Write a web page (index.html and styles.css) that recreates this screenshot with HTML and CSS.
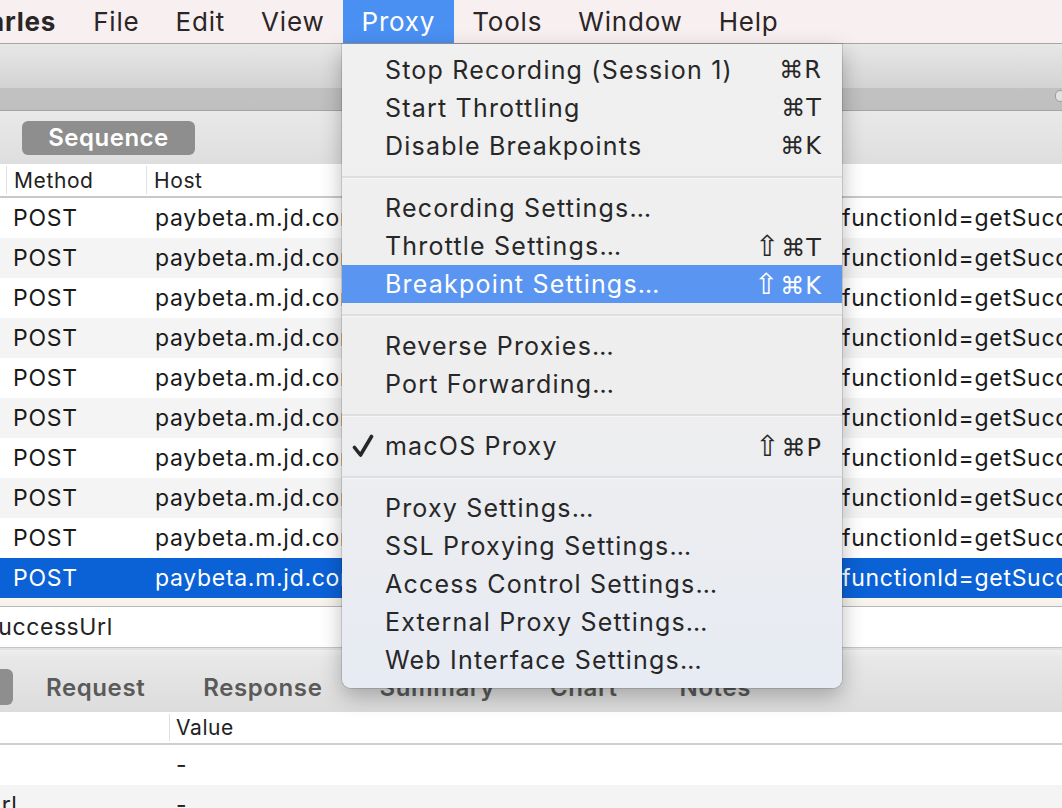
FILE: index.html
```html
<!DOCTYPE html>
<html>
<head>
<meta charset="utf-8">
<link rel="stylesheet" href="styles.css">
</head>
<body>
<div class="screen">
  <div class="menubar">
    <span class="app">Charles</span>
    <span class="mi">File</span>
    <span class="mi">Edit</span>
    <span class="mi">View</span>
    <span class="mi active">Proxy</span>
    <span class="mi">Tools</span>
    <span class="mi">Window</span>
    <span class="mi">Help</span>
  </div>

  <div class="window">
    <div class="toolbar"></div>
    <div class="toolband"><span class="searchedge"></span></div>
    <div class="viewbar"><span class="seg">Sequence</span></div>

    <div class="thead">
      <span class="c0"></span>
      <span class="c1">Method</span>
      <span class="c2">Host</span>
      <span class="c3"></span>
    </div>
    <div class="tbody">
      <div class="row"><span class="c0"></span><span class="c1">POST</span><span class="c2">paybeta.m.jd.com</span><span class="c3">functionId=getSuccessUrl</span></div>
      <div class="row alt"><span class="c0"></span><span class="c1">POST</span><span class="c2">paybeta.m.jd.com</span><span class="c3">functionId=getSuccessUrl</span></div>
      <div class="row"><span class="c0"></span><span class="c1">POST</span><span class="c2">paybeta.m.jd.com</span><span class="c3">functionId=getSuccessUrl</span></div>
      <div class="row alt"><span class="c0"></span><span class="c1">POST</span><span class="c2">paybeta.m.jd.com</span><span class="c3">functionId=getSuccessUrl</span></div>
      <div class="row"><span class="c0"></span><span class="c1">POST</span><span class="c2">paybeta.m.jd.com</span><span class="c3">functionId=getSuccessUrl</span></div>
      <div class="row alt"><span class="c0"></span><span class="c1">POST</span><span class="c2">paybeta.m.jd.com</span><span class="c3">functionId=getSuccessUrl</span></div>
      <div class="row"><span class="c0"></span><span class="c1">POST</span><span class="c2">paybeta.m.jd.com</span><span class="c3">functionId=getSuccessUrl</span></div>
      <div class="row alt"><span class="c0"></span><span class="c1">POST</span><span class="c2">paybeta.m.jd.com</span><span class="c3">functionId=getSuccessUrl</span></div>
      <div class="row"><span class="c0"></span><span class="c1">POST</span><span class="c2">paybeta.m.jd.com</span><span class="c3">functionId=getSuccessUrl</span></div>
      <div class="row sel"><span class="c0"></span><span class="c1">POST</span><span class="c2">paybeta.m.jd.com</span><span class="c3">functionId=getSuccessUrl</span></div>
    </div>
    <div class="tailband"></div>

    <div class="urlrow"><span class="urltext">getSuccessUrl</span></div>

    <div class="tabs">
      <span class="tabbtn"></span>
      <span class="tab t-req">Request</span>
      <span class="tab t-res">Response</span>
      <span class="tab t-sum">Summary</span>
      <span class="tab t-chart">Chart</span>
      <span class="tab t-notes">Notes</span>
    </div>

    <div class="dhead"><span class="d1"></span><span class="d2">Value</span></div>
    <div class="drow"><span class="d1"></span><span class="d2">-</span></div>
    <div class="drow alt"><span class="d1 cut">Url</span><span class="d2">-</span></div>
  </div>

  <div class="menu">
    <div class="item"><span class="chk"></span><span class="lbl">Stop Recording (Session 1)</span><span class="sc">⌘R</span></div>
    <div class="item"><span class="chk"></span><span class="lbl">Start Throttling</span><span class="sc">⌘T</span></div>
    <div class="item"><span class="chk"></span><span class="lbl">Disable Breakpoints</span><span class="sc">⌘K</span></div>
    <div class="sep"></div>
    <div class="item"><span class="chk"></span><span class="lbl">Recording Settings…</span><span class="sc"></span></div>
    <div class="item"><span class="chk"></span><span class="lbl">Throttle Settings…</span><span class="sc"><span class="shift">⇧</span>⌘T</span></div>
    <div class="item hl"><span class="chk"></span><span class="lbl">Breakpoint Settings…</span><span class="sc"><span class="shift">⇧</span>⌘K</span></div>
    <div class="sep"></div>
    <div class="item"><span class="chk"></span><span class="lbl">Reverse Proxies…</span><span class="sc"></span></div>
    <div class="item"><span class="chk"></span><span class="lbl">Port Forwarding…</span><span class="sc"></span></div>
    <div class="sep"></div>
    <div class="item"><span class="chk"><svg class="tick" viewBox="0 0 22 24" width="22" height="24"><path d="M2.5 13.5 L8.5 21 L19.5 2.5" fill="none" stroke="#272727" stroke-width="3.6" stroke-linecap="round" stroke-linejoin="round"/></svg></span><span class="lbl">macOS Proxy</span><span class="sc"><span class="shift">⇧</span>⌘P</span></div>
    <div class="sep"></div>
    <div class="item"><span class="chk"></span><span class="lbl">Proxy Settings…</span><span class="sc"></span></div>
    <div class="item"><span class="chk"></span><span class="lbl">SSL Proxying Settings…</span><span class="sc"></span></div>
    <div class="item"><span class="chk"></span><span class="lbl">Access Control Settings…</span><span class="sc"></span></div>
    <div class="item"><span class="chk"></span><span class="lbl">External Proxy Settings…</span><span class="sc"></span></div>
    <div class="item"><span class="chk"></span><span class="lbl">Web Interface Settings…</span><span class="sc"></span></div>
  </div>
</div>
</body>
</html>
```

FILE: styles.css
```css
* { box-sizing: border-box; }
html, body { margin: 0; padding: 0; }
body {
  font-family: Inter, "Liberation Sans", "DejaVu Sans", sans-serif;
  color: #222;
  background: #fff;
}
.screen {
  position: relative;
  width: 1062px;
  height: 808px;
  overflow: hidden;
}

/* menu bar */
.menubar {
  height: 44px;
  background: #f7eff0;
  border-bottom: 1px solid #a9a5a6;
  display: flex;
  align-items: stretch;
  font-size: 26px;
  letter-spacing: 0.8px;
  color: #2b2526;
  white-space: nowrap;
}
.menubar span { display: flex; align-items: center; }
.app { font-weight: 700; margin-left: -48px; margin-right: 19px; }
.mi { padding: 0 18px; }
.mi.active { background: #4a8ff2; color: #fff; padding: 0 19px; }

/* window */
.toolbar {
  height: 44px;
  background: linear-gradient(#e7e7e7, #d3d3d3);
}
.toolband {
  height: 23px;
  background: linear-gradient(#c2c2c2, #bfbfbf);
  border-bottom: 1px solid #a4a4a4;
  display: flex;
  justify-content: flex-end;
}
.searchedge {
  width: 10px; height: 12px;
  margin-top: 2px; margin-right: -3px;
  border: 1px solid #9a9a9a; border-radius: 6px;
  background: #e2e2e2;
}
.viewbar {
  height: 53px;
  background: linear-gradient(#e9e9e9, #dedede);
  display: flex;
  align-items: center;
  padding-left: 22px;
}
.seg {
  width: 173px;
  height: 34px;
  background: #8e8e8e;
  border-radius: 6px;
  color: #fff;
  font-weight: 600;
  font-size: 24px;
  letter-spacing: 0.5px;
  display: flex;
  align-items: center;
  justify-content: center;
}

.thead, .row {
  display: grid;
  grid-template-columns: 6px 140px 692px 1fr;
  white-space: nowrap;
  overflow: hidden;
}
.thead {
  height: 34px;
  background: #fff;
  border-bottom: 2px solid #c9c9c9;
  font-size: 21px;
  letter-spacing: 0.6px;
  align-items: center;
}
.thead span { height: 28px; display: flex; align-items: center; border-left: 1px solid #e2e2e2; padding-left: 7px; }
.thead .c0 { border-left: none; }
.row {
  height: 40px;
  align-items: center;
  font-size: 23px;
  letter-spacing: 0.7px;
  background: #fff;
  color: #1a1a1a;
}
.row span { padding-left: 7px; overflow: hidden; }
.row .c2 { padding-left: 9px; }
.row .c3 { padding-left: 4px; }
.row.alt { background: #f4f4f4; }
.row.sel { background: #0b61d6; color: #fff; }
.tailband {
  height: 9px;
  background: linear-gradient(#fbf6ec, #f3f1ee);
  border-bottom: 1px solid #b9b9b9;
}
.urlrow {
  height: 41px;
  background: #fff;
  border-bottom: 1px solid #c5c5c5;
  display: flex;
  align-items: center;
  font-size: 23px;
  letter-spacing: 0.6px;
  overflow: hidden;
}
.urltext { margin-left: -54px; }

.tabs {
  height: 64px;
  padding-top: 12px;
  background: linear-gradient(#efefef 0, #e8e8e8 12%, #dcdcdc 100%);
  border-top: 2px solid #e2e2e2;
  display: flex;
  align-items: center;
  font-size: 24px;
  letter-spacing: 0.6px;
  font-weight: 600;
  color: #5a5a5a;
  white-space: nowrap;
}
.tabbtn {
  width: 30px; height: 36px;
  margin-left: -17px;
  background: #8e8e8e;
  border-radius: 6px;
}
.t-req { margin-left: 33px; }
.t-res { margin-left: 58px; }
.t-sum { margin-left: 57px; }
.t-chart { margin-left: 55px; }
.t-notes { margin-left: 62px; }

.dhead, .drow {
  display: grid;
  grid-template-columns: 169px 1fr;
  align-items: center;
  font-size: 21px;
  letter-spacing: 0.6px;
}
.dhead {
  height: 33px;
  background: #fff;
  border-bottom: 2px solid #cfcfcf;
}
.dhead .d2 { border-left: 1px solid #e0e0e0; height: 27px; display: flex; align-items: center; padding-left: 6px; }
.drow { height: 40px; background: #fff; font-size: 23px; }
.drow .d2 { padding-left: 7px; }
.drow.alt { background: #f4f4f4; }
.cut { margin-left: -16px; }

/* dropdown menu */
.menu {
  position: absolute;
  left: 342px;
  top: 44px;
  width: 500px;
  height: 644px;
  padding: 7px 0 9px;
  background: linear-gradient(#f0f0f0 0%, #eeeeef 55%, #e7ebf3 100%);
  border-radius: 0 0 9px 9px;
  box-shadow: 0 8px 22px rgba(0,0,0,0.28), 0 0 0 1px rgba(0,0,0,0.12);
  font-size: 25px;
  letter-spacing: 1.2px;
  color: #272727;
}
.item {
  height: 38px;
  display: grid;
  grid-template-columns: 43px 1fr auto;
  align-items: center;
  padding-right: 20px;
  white-space: nowrap;
}
.item.hl { background: #5a95f1; color: #fff; }
.chk {
  display: flex;
  align-items: center;
  padding-left: 10px;
}
.tick { display: block; }
.sc {
  font-family: "DejaVu Sans", sans-serif;
  font-size: 24px;
  letter-spacing: 1px;
}
.shift { font-size: 29px; margin-right: 1px; }
.sep {
  height: 3px;
  margin: 11px 0 10px;
  background: #dedede;
  border-bottom: 1px solid #f6f6f6;
}
```
